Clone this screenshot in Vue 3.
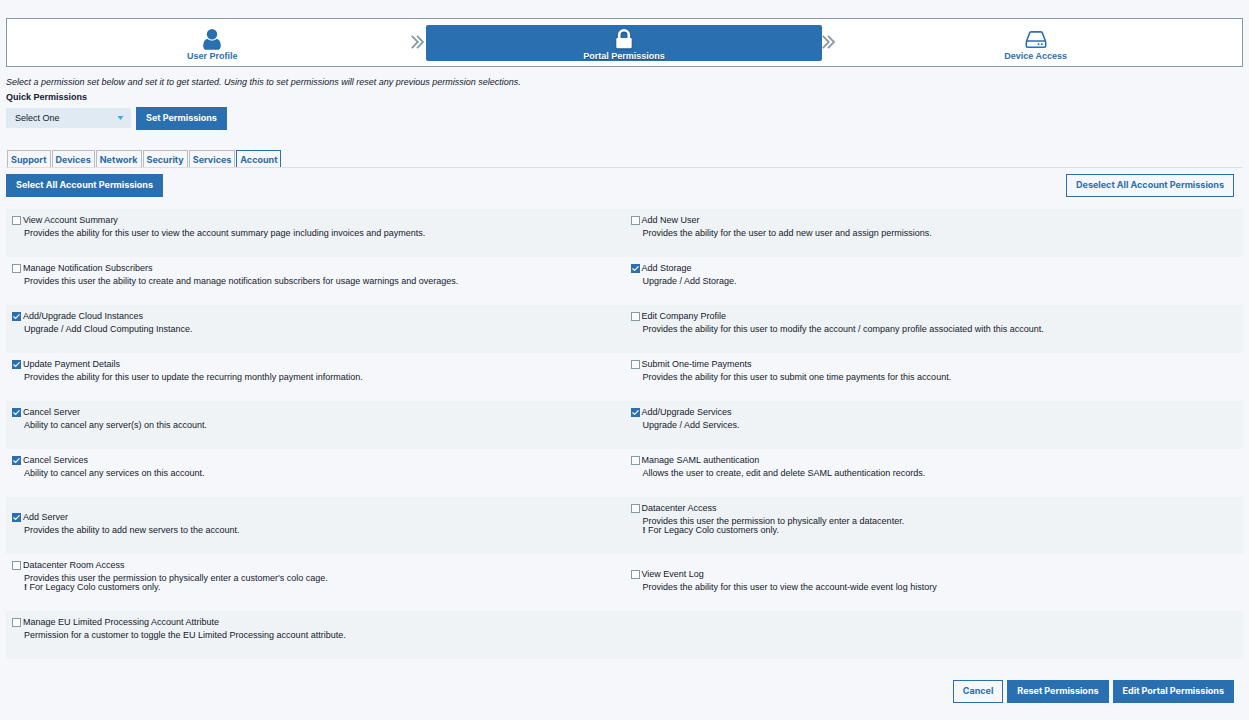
<script setup>
import { ref, reactive } from 'vue'

const preset = ref('')
const activeTab = ref('Account')
const tabs = ['Support', 'Devices', 'Network', 'Security', 'Services', 'Account']

const legacy = 'For Legacy Colo customers only.'
const rows = reactive([
  [
    { id: 'summary', name: 'View Account Summary', on: false, text: 'Provides the ability for this user to view the account summary page including invoices and payments.' },
    { id: 'new-user', name: 'Add New User', on: false, text: 'Provides the ability for the user to add new user and assign permissions.' },
  ],
  [
    { id: 'notify', name: 'Manage Notification Subscribers', on: false, text: 'Provides this user the ability to create and manage notification subscribers for usage warnings and overages.' },
    { id: 'storage', name: 'Add Storage', on: true, text: 'Upgrade / Add Storage.' },
  ],
  [
    { id: 'cloud', name: 'Add/Upgrade Cloud Instances', on: true, text: 'Upgrade / Add Cloud Computing Instance.' },
    { id: 'company', name: 'Edit Company Profile', on: false, text: 'Provides the ability for this user to modify the account / company profile associated with this account.' },
  ],
  [
    { id: 'payment', name: 'Update Payment Details', on: true, text: 'Provides the ability for this user to update the recurring monthly payment information.' },
    { id: 'one-time', name: 'Submit One-time Payments', on: false, text: 'Provides the ability for this user to submit one time payments for this account.' },
  ],
  [
    { id: 'cancel-server', name: 'Cancel Server', on: true, text: 'Ability to cancel any server(s) on this account.' },
    { id: 'services', name: 'Add/Upgrade Services', on: true, text: 'Upgrade / Add Services.' },
  ],
  [
    { id: 'cancel-services', name: 'Cancel Services', on: true, text: 'Ability to cancel any services on this account.' },
    { id: 'saml', name: 'Manage SAML authentication', on: false, text: 'Allows the user to create, edit and delete SAML authentication records.' },
  ],
  [
    { id: 'add-server', name: 'Add Server', on: true, text: 'Provides the ability to add new servers to the account.' },
    { id: 'datacenter', name: 'Datacenter Access', on: false, text: 'Provides this user the permission to physically enter a datacenter.', note: legacy },
  ],
  [
    { id: 'room', name: 'Datacenter Room Access', on: false, text: "Provides this user the permission to physically enter a customer's colo cage.", note: legacy },
    { id: 'event-log', name: 'View Event Log', on: false, text: 'Provides the ability for this user to view the account-wide event log history' },
  ],
  [
    { id: 'eu', name: 'Manage EU Limited Processing Account Attribute', on: false, text: 'Permission for a customer to toggle the EU Limited Processing account attribute.' },
  ],
])

function setAll(value) {
  rows.forEach((row) => row.forEach((p) => { p.on = value }))
}
</script>

<template>
  <main class="page">
    <nav class="steps" aria-label="Progress">
      <div class="step">
        <a href="#profile" class="step-link">
          <svg class="icon" width="20" height="22" viewBox="0 0 20 22" aria-hidden="true">
            <circle cx="10" cy="5.3" r="5.2" fill="currentColor" />
            <path d="M5.2 9.700C2.600 10.500 1.200 13.300 1.200 16.900C1.200 19.300 2.400 20.800 4.600 20.800H15.400C17.600 20.800 18.800 19.300 18.800 16.900C18.800 13.300 17.400 10.500 14.800 9.700C13.500 10.900 11.900 11.500 10 11.500C8.100 11.500 6.500 10.900 5.200 9.700Z" fill="currentColor" />
          </svg>
          <span>User Profile</span>
        </a>
        <svg class="chevrons" width="13" height="14" viewBox="0 0 13 14" aria-hidden="true">
          <path d="M0.800 0.800L6.800 7L0.800 13.200M6 0.800L12 7L6 13.200" />
        </svg>
      </div>
      <div class="step">
        <a href="#permissions" class="step-link active" aria-current="step">
          <svg class="icon" width="20" height="22" viewBox="0 0 20 22" aria-hidden="true">
            <path d="M5.200 10V6.200A4.800 4.900 0 0 1 14.800 6.200V10" fill="none" stroke="currentColor" stroke-width="2.600" />
            <rect x="2.300" y="9" width="15.400" height="10.200" rx="1.200" fill="currentColor" />
          </svg>
          <span>Portal Permissions</span>
        </a>
        <svg class="chevrons" width="13" height="14" viewBox="0 0 13 14" aria-hidden="true">
          <path d="M0.800 0.800L6.800 7L0.800 13.200M6 0.800L12 7L6 13.200" />
        </svg>
      </div>
      <div class="step">
        <a href="#devices" class="step-link">
          <svg class="icon" width="22" height="22" viewBox="0 0 22 22" aria-hidden="true">
            <g fill="none" stroke="currentColor" stroke-width="1.600" stroke-linejoin="round">
              <path d="M1.500 12.200L4.600 4Q5 2.900 6.100 2.900H15.900Q17 2.900 17.400 4L20.500 12.200" />
              <rect x="1.300" y="12" width="19.400" height="6.300" rx="1.500" />
            </g>
            <circle cx="13.500" cy="15.200" r="1" fill="currentColor" />
            <circle cx="16.800" cy="15.200" r="1" fill="currentColor" />
          </svg>
          <span>Device Access</span>
        </a>
      </div>
    </nav>

    <p class="hint">Select a permission set below and set it to get started. Using this to set permissions will reset any previous permission selections.</p>
    <label class="quick-label" for="quick">Quick Permissions</label>
    <div class="quick">
      <div class="select-wrap">
        <select id="quick" v-model="preset">
          <option value="">Select One</option>
        </select>
        <svg class="caret" width="7" height="4" viewBox="0 0 7 4" aria-hidden="true"><path d="M0.500 0H6.500L3.500 4Z" /></svg>
      </div>
      <button type="button" class="btn">Set Permissions</button>
    </div>

    <div class="tabs" role="tablist">
      <button
        v-for="tab in tabs"
        :key="tab"
        type="button"
        role="tab"
        class="tab"
        :class="{ current: tab === activeTab }"
        :aria-selected="tab === activeTab"
        @click="activeTab = tab"
      >{{ tab }}</button>
    </div>

    <div class="bulk">
      <button type="button" class="btn" @click="setAll(true)">Select All Account Permissions</button>
      <button type="button" class="btn outline" @click="setAll(false)">Deselect All Account Permissions</button>
    </div>

    <table class="grid">
      <tbody>
        <tr v-for="(row, i) in rows" :key="i">
          <td v-for="p in row" :key="p.id">
            <div class="perm">
              <input :id="p.id" v-model="p.on" type="checkbox" />
              <label :for="p.id">{{ p.name }}</label>
            </div>
            <p class="desc">{{ p.text }}</p>
            <p v-if="p.note" class="note"><b>!</b> {{ p.note }}</p>
          </td>
          <td v-if="row.length === 1"></td>
        </tr>
      </tbody>
    </table>

    <div class="actions">
      <button type="button" class="btn outline">Cancel</button>
      <button type="button" class="btn">Reset Permissions</button>
      <button type="button" class="btn">Edit Portal Permissions</button>
    </div>
  </main>
</template>

<style>
body {
  background: #f5f7fb;
}
</style>

<style scoped>
.page {
  padding: 18px 6px 16px;
  font-family: "Liberation Sans", Arial, sans-serif;
  font-size: 9px;
  line-height: 9px;
  color: #14202c;
}
.page p {
  margin: 0;
}
.page button,
.page select {
  font-family: inherit;
  cursor: pointer;
}
.steps {
  display: grid;
  grid-template-columns: repeat(3, 1fr);
  background: #fff;
  border: 1px solid #8799a3;
  padding: 6px 0 5px;
}
.step {
  position: relative;
  padding: 0 8px 0 7px;
}
.step-link {
  display: flex;
  flex-direction: column;
  align-items: center;
  height: 36px;
  box-sizing: border-box;
  padding-top: 4px;
  border-radius: 2px;
  color: #2a70b0;
  font-weight: bold;
  line-height: 11px;
  text-decoration: none;
}
.step-link.active {
  background: #2a70b0;
  color: #fff;
  text-shadow: 0 1px 1px rgba(0, 0, 0, 0.4);
}
.icon {
  flex-shrink: 0;
}
.active .icon {
  filter: drop-shadow(0 1px 1px rgba(0, 0, 0, 0.3));
}
.chevrons {
  position: absolute;
  top: 10px;
  right: -5px;
  fill: none;
  stroke: #8799a3;
  stroke-width: 1.8px;
}
.hint {
  padding-top: 10px;
  line-height: 11px;
  font-style: italic;
}
.quick-label {
  display: block;
  padding-top: 4px;
  line-height: 11px;
  font-weight: bold;
}
.quick {
  display: flex;
  gap: 5px;
  padding-top: 4px;
}
.select-wrap {
  position: relative;
  margin-top: 1px;
}
.select-wrap select {
  display: block;
  width: 125px;
  height: 20px;
  padding: 0 9px;
  appearance: none;
  border: 0;
  border-radius: 0;
  background: #dfeaf2;
  color: #14202c;
  font-size: 9px;
}
.caret {
  position: absolute;
  top: 8px;
  right: 7px;
  fill: #45a5e6;
  pointer-events: none;
}
.page .btn {
  height: 23px;
  padding: 0 9px 2px;
  border: 1px solid #2a70b0;
  background: #2a70b0;
  color: #fff;
  font-family: Inter, "Liberation Sans", sans-serif;
  font-size: 9px;
  font-weight: bold;
}
.page .btn.outline {
  background: #f5f7fb;
  color: #2a70b0;
}
.tabs {
  display: flex;
  gap: 1px;
  margin-top: 20px;
  padding: 0 1px;
  border-bottom: 1px solid #dcdfe5;
}
.page .tab {
  height: 17px;
  padding: 1px 3px 0;
  border: 1px solid #b9bcc0;
  border-bottom: 0;
  background: transparent;
  color: #2a6aa8;
  font-family: Inter, "Liberation Sans", sans-serif;
  font-size: 9px;
  font-weight: bold;
}
.page .tab.current {
  border-color: #2a70b0;
}
.bulk {
  display: flex;
  justify-content: space-between;
  padding: 6px 9px 12px 0;
}
.grid {
  width: 100%;
  table-layout: fixed;
  border-collapse: collapse;
}
.grid tr:nth-child(odd) {
  background: #eff3f6;
}
.grid td {
  padding: 5px 6px 19px;
  vertical-align: bottom;
}
.perm {
  display: flex;
  align-items: center;
  gap: 2px;
  line-height: 13px;
}
.perm input {
  width: 9px;
  height: 9px;
  margin: 0;
  appearance: none;
  border: 1px solid #8799a3;
  background: #fff;
}
.perm input:checked {
  border-color: #2a70b0;
  background: #2a70b0 url("data:image/svg+xml,%3Csvg xmlns='http://www.w3.org/2000/svg' viewBox='0 0 7 7'%3E%3Cpath d='M0.500 3.500L2.600 5.500L6.500 1.400' fill='none' stroke='white' stroke-width='1.200'/%3E%3C/svg%3E") center / 7px 7px no-repeat;
}
.desc {
  padding: 2px 0 0 12px;
}
.note {
  padding-left: 12px;
}
.actions {
  display: flex;
  justify-content: flex-end;
  gap: 4px;
  padding: 21px 9px 0 0;
}
</style>
